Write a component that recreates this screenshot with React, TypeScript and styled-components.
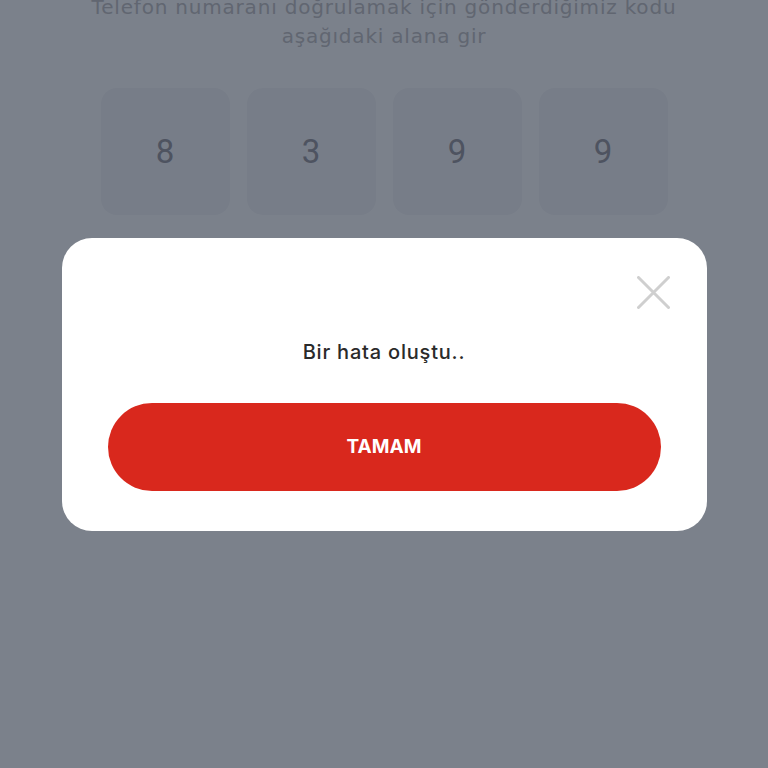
import React from 'react'
import styled, { createGlobalStyle } from 'styled-components'

const GlobalStyle = createGlobalStyle`
  html, body {
    margin: 0;
    padding: 0;
    height: 768px;
    overflow: hidden;
    background: #ffffff;
  }
  * { box-sizing: border-box; }
`

const Screen = styled.div`
  height: 768px;
  padding: 0 40px;
  background: #ffffff;
  font-family: Inter, "Noto Sans", sans-serif;
`

const Intro = styled.p`
  margin: -7px 0 0;
  text-align: center;
  font-family: "DejaVu Sans", Inter, sans-serif;
  font-size: 20px;
  line-height: 29px;
  letter-spacing: 0.8px;
  color: #bdbbbd;
`

const CodeRow = styled.div`
  display: grid;
  grid-template-columns: repeat(4, 129px);
  justify-content: center;
  gap: 17px;
  margin-top: 37px;
`

const CodeBox = styled.div`
  height: 127px;
  border-radius: 16px;
  background: #f5f5f7;
  display: flex;
  align-items: center;
  justify-content: center;
  font-family: Roboto, "Liberation Sans", sans-serif;
  font-size: 33px;
  color: #8e8c93;
`

const Backdrop = styled.div`
  position: fixed;
  inset: 0;
  background: rgba(35, 45, 62, 0.6);
  display: flex;
  align-items: center;
  justify-content: center;
`

const Dialog = styled.div`
  position: relative;
  width: 645px;
  height: 293px;
  border-radius: 30px;
  background: #ffffff;
  padding: 97px 46px 0;
  display: flex;
  flex-direction: column;
  align-items: center;
  font-family: Inter, "Noto Sans", sans-serif;
`

const CloseButton = styled.button`
  position: absolute;
  top: 38px;
  right: 37px;
  width: 33px;
  height: 33px;
  padding: 0;
  border: none;
  background: none;
  cursor: pointer;
`

const Message = styled.p`
  margin: 0;
  font-size: 20px;
  font-weight: 500;
  letter-spacing: 0.8px;
  color: #2a2a2a;
  line-height: 34px;
`

const OkButton = styled.button`
  margin-top: 34px;
  width: 100%;
  height: 88px;
  border: none;
  border-radius: 44px;
  background: #d9281d;
  color: #ffffff;
  font-family: Inter, "Noto Sans", sans-serif;
  font-size: 19px;
  font-weight: 700;
  cursor: pointer;
`

const digits = ['8', '3', '9', '9']

const App: React.FC = () => {
  return (
    <>
      <GlobalStyle />
      <Screen>
        <Intro>
          Telefon numaranı doğrulamak için gönderdiğimiz kodu
          <br />
          aşağıdaki alana gir
        </Intro>
        <CodeRow>
          {digits.map((d, i) => (
            <CodeBox key={i}>{d}</CodeBox>
          ))}
        </CodeRow>
      </Screen>
      <Backdrop>
        <Dialog>
          <CloseButton aria-label="Kapat">
            <svg width="33" height="33" viewBox="0 0 33 33">
              <path d="M1.5 1.5 L31.5 31.5 M31.5 1.5 L1.5 31.5" stroke="#cfcfcf" strokeWidth="3" strokeLinecap="round" />
            </svg>
          </CloseButton>
          <Message>Bir hata oluştu..</Message>
          <OkButton>TAMAM</OkButton>
        </Dialog>
      </Backdrop>
    </>
  )
}

export default App
